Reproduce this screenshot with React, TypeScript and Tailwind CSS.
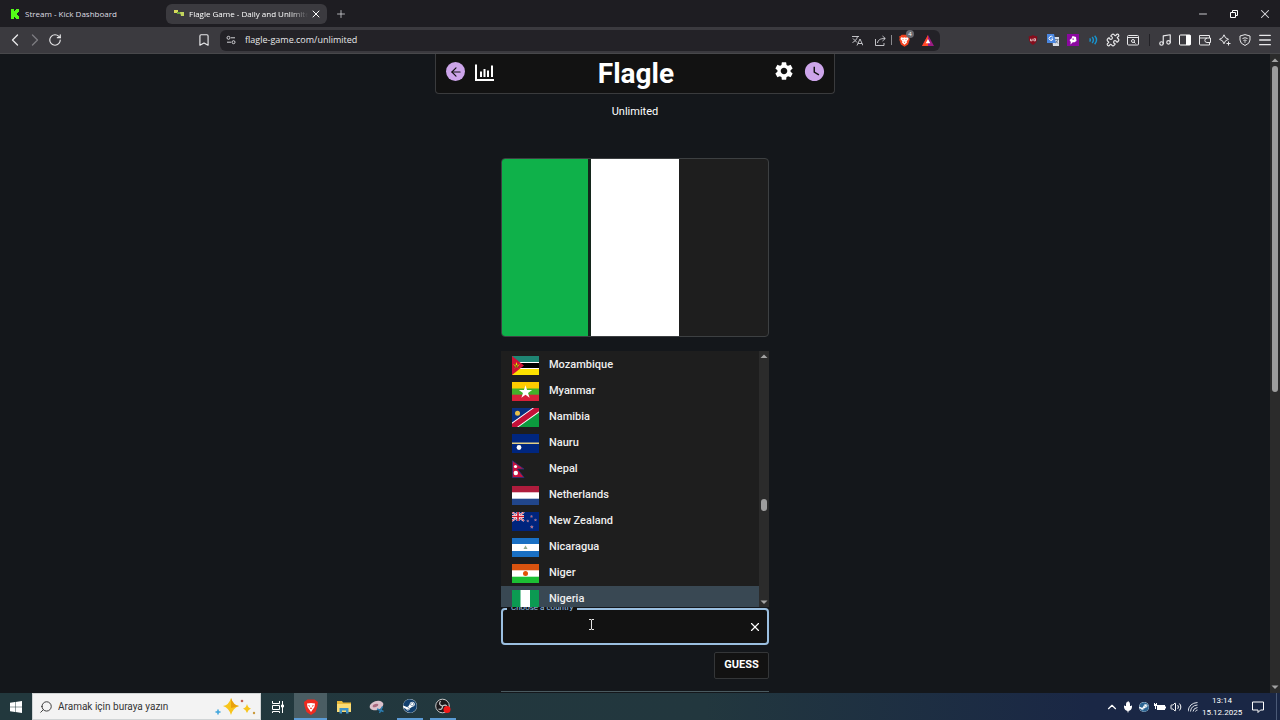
import type { ReactNode } from "react";
import {
  ArrowLeft,
  Bookmark,
  ChevronLeft,
  ChevronRight,
  ChevronUp,
  Menu,
  Mic,
  Minus,
  Music,
  Plus,
  Puzzle,
  RotateCw,
  Search,
  Volume2,
  X,
} from "lucide-react";
import { MdSettings, MdWatchLater } from "react-icons/md";
import { FaSteam } from "react-icons/fa";

const star = "M0-1 .22-.31.95-.31.36.12.59.81 0 .38-.59.81-.36.12-.95-.31-.22-.31Z";

const flags: Record<string, ReactNode> = {
  Mozambique: (
    <>
      <path fill="#fff" d="M0 0h27v19H0z" />
      <path fill="#1f8573" d="M0 0h27v6H0z" />
      <path fill="#000" d="M0 7h27v5H0z" />
      <path fill="#fce100" d="M0 13h27v6H0z" />
      <path fill="#d21034" d="M0 0v19l12-9.500z" />
      <path fill="#fce100" d={star} transform="translate(4.500 9.500) scale(3.600)" />
      <path stroke="#222" strokeWidth=".8" d="m2.500 12 4-4m-4 0 4 4" />
    </>
  ),
  Myanmar: (
    <>
      <path fill="#fecb00" d="M0 0h27v7H0z" />
      <path fill="#43b02a" d="M0 6.500h27V13H0z" />
      <path fill="#d8203a" d="M0 12.700h27V19H0z" />
      <path fill="#fff" d={star} transform="translate(13.500 10.200) scale(7)" />
    </>
  ),
  Namibia: (
    <>
      <path fill="#0a2f80" d="M0 0h27L0 19z" />
      <path fill="#0c9a3e" d="M27 0v19H0z" />
      <path fill="#fff" d="M0 14.500 20.500 0H27v4.500L6.500 19H0z" />
      <path fill="#c41038" d="M0 15.700 22 0h5v3.300L5 19H0z" />
      <circle cx="5.500" cy="5.200" r="2.500" fill="#e8c04a" />
    </>
  ),
  Nauru: (
    <>
      <path fill="#00267f" d="M0 0h27v19H0z" />
      <path fill="#e3cf85" d="M0 8.500h27V10H0z" />
      <circle cx="7" cy="13.500" r="2.400" fill="#fff" />
    </>
  ),
  Nepal: (
    <>
      <path fill="#c8103e" stroke="#24347e" strokeWidth=".8" d="M.4.8 12 9H5.500l6.500 8.500H.4z" />
      <circle cx="3.500" cy="6.500" r="1.600" fill="#fff" />
      <circle cx="3.800" cy="13" r="2.200" fill="#fff" />
    </>
  ),
  Netherlands: (
    <>
      <path fill="#fff" d="M0 0h27v19H0z" />
      <path fill="#ae1c3c" d="M0 0h27v6.300H0z" />
      <path fill="#21468b" d="M0 12.700h27V19H0z" />
    </>
  ),
  "New Zealand": (
    <>
      <path fill="#00247d" d="M0 0h27v19H0z" />
      <path stroke="#fff" strokeWidth="2" d="m0 0 12 9M12 0 0 9" />
      <path stroke="#cc142b" strokeWidth=".8" d="m0 0 12 9M12 0 0 9" />
      <path stroke="#fff" strokeWidth="3" d="M6 0v9M0 4.500h12" />
      <path stroke="#cc142b" strokeWidth="1.700" d="M6 0v9M0 4.500h12" />
      <g fill="#cc142b" stroke="#fff" strokeWidth=".2">
        <path d={star} transform="translate(19.500 4.500) scale(1.200)" />
        <path d={star} transform="translate(15.800 9) scale(1.200)" />
        <path d={star} transform="translate(23.500 8) scale(1.200)" />
        <path d={star} transform="translate(19.800 15) scale(1.500)" />
      </g>
    </>
  ),
  Nicaragua: (
    <>
      <path fill="#fff" d="M0 0h27v19H0z" />
      <path fill="#1a70c4" d="M0 0h27v6H0zM0 13h27v6H0z" />
      <path fill="#8fa98f" d="m13.500 7.500 2 3.500h-4z" />
    </>
  ),
  Niger: (
    <>
      <path fill="#fff" d="M0 0h27v19H0z" />
      <path fill="#d9530f" d="M0 0h27v6.300H0z" />
      <path fill="#1cc034" d="M0 12.700h27V19H0z" />
      <circle cx="13.500" cy="9.500" r="2.500" fill="#e05206" />
    </>
  ),
  Nigeria: (
    <>
      <path fill="#fff" d="M0 0h27v19H0z" />
      <path fill="#0b9a52" d="M0 0h8.500v19H0zM18 0h9v19h-9z" />
    </>
  ),
};

const countries = Object.keys(flags);

function ScrollArrow({ down = false }: { down?: boolean }) {
  return (
    <svg viewBox="0 0 10 10" className="size-2.5 shrink-0">
      <path fill="#a3a3a3" d={down ? "M1.500 3.500h7L5 7z" : "M1.500 7h7L5 3.500z"} />
    </svg>
  );
}

function IconButton({ label, className = "w-5", children }: { label: string; className?: string; children: ReactNode }) {
  return (
    <button aria-label={label} className={`flex h-full shrink-0 items-center justify-center ${className}`}>
      {children}
    </button>
  );
}

function TabStrip() {
  return (
    <div className="flex h-[27px] shrink-0 items-center bg-[#1e1d22] text-[8px] text-[#dedee2]">
      <button className="flex w-[166px] items-center gap-[5px] pl-2.5">
        <svg viewBox="0 0 10 10" className="size-2.5">
          <path fill="#53fc18" d="M1 0h3v2h1V1h1V0h3v3H8v1H7v2h1v1h1v3H6V9H5V8H4v2H1z" />
        </svg>
        Stream - Kick Dashboard
      </button>
      <div className="flex h-5 w-[161px] items-center rounded-md bg-[#3b3a3f] pl-2 text-white">
        <svg viewBox="0 0 10 10" className="mr-[5px] size-2.5 shrink-0">
          <path fill="#d7d95c" d="M0 1h4v3H0z" />
          <path fill="#68a33d" d="M3 3h4v2H3z" />
          <path fill="#c2d45e" d="M6 3h4v4H7z" />
        </svg>
        <button className="w-[119px] overflow-hidden whitespace-nowrap text-left [mask-image:linear-gradient(to_right,black_85%,transparent)]">
          Flagle Game - Daily and Unlimited
        </button>
        <IconButton label="Close tab" className="w-4">
          <X className="size-3" />
        </IconButton>
      </div>
      <IconButton label="New tab" className="w-7">
        <Plus className="size-3" strokeWidth={1.5} />
      </IconButton>
      <div className="ml-auto flex h-full">
        <IconButton label="Minimize" className="w-[30px]">
          <Minus className="size-3" strokeWidth={1.8} />
        </IconButton>
        <IconButton label="Restore" className="w-[31px]">
          <svg viewBox="0 0 8 8" className="size-2" fill="none" stroke="#fff">
            <path d="M.5 2.500h5v5h-5zM2.500 2V.5h5v5H6" />
          </svg>
        </IconButton>
        <IconButton label="Close" className="w-[31px]">
          <X className="size-3.5" strokeWidth={1.8} />
        </IconButton>
      </div>
    </div>
  );
}

function Toolbar() {
  return (
    <div className="flex h-[27px] shrink-0 items-center border-b border-[#48484b] bg-[#3b3a3f] px-[5px] text-[#e8e8ea]">
      <IconButton label="Back">
        <ChevronLeft className="size-5" strokeWidth={1.6} />
      </IconButton>
      <IconButton label="Forward">
        <ChevronRight className="size-5 text-[#7c7b80]" strokeWidth={1.6} />
      </IconButton>
      <IconButton label="Reload">
        <RotateCw className="size-3.5" />
      </IconButton>
      <div className="flex flex-1 items-center gap-1.5 pl-[129px] pr-[83px]">
        <IconButton label="Bookmark">
          <Bookmark className="size-3.5" />
        </IconButton>
        <div className="flex h-[21px] flex-1 items-center rounded-md bg-[#232227] pr-px">
          <IconButton label="Site settings" className="w-[25px] pr-1">
            <svg viewBox="0 0 10 10" className="size-2.5" fill="none" stroke="#d4d4d8">
              <circle cx="2.500" cy="2.800" r="1.500" />
              <path d="M5 2.800h4M1 7.200h4" />
              <circle cx="7.500" cy="7.200" r="1.500" />
            </svg>
          </IconButton>
          <input
            aria-label="Address"
            defaultValue="flagle-game.com/unlimited"
            className="min-w-0 flex-1 bg-transparent text-[9px] outline-none"
          />
          <IconButton label="Translate" className="w-[23px]">
            <svg viewBox="0 0 11 11" className="size-[11px]" fill="none" stroke="#d4d4d8" strokeWidth=".9">
              <path d="M0 1.500h7M1 3.500l4 4M5.500 1.500C5 4 3 6.500.5 7.500M5 10.500 8 4l3 6.500M6 8.500h4" />
            </svg>
          </IconButton>
          <IconButton label="Share" className="w-[22px]">
            <svg viewBox="0 0 11 11" className="size-[11px]" fill="none" stroke="#d4d4d8" strokeWidth=".9">
              <path d="M.5 4v6.500H9V8M2.500 8C3 5 5 3.500 10 3.500M7.500 1l2.800 2.500L7.500 6" />
            </svg>
          </IconButton>
          <span className="h-2.5 w-px bg-[#8a8a8e]" />
          <IconButton label="Brave Shields" className="relative w-6">
            <svg viewBox="0 0 16 16" className="size-[13px]">
              <path fill="#f4431f" d="M4.500 1h7L13 2.600l1.500.2-.5 2.700.4 1.500-2 6L8 15.700 3.600 13l-2-6L2 5.500l-.5-2.700 1.500-.2z" />
              <path fill="#fff" d="m4 4 2.500.6L8 4l1.500.6L12 4l1 2-2.300 3 .3 1.400L8 13.200l-3-2.800L5.300 9 3 6z" />
              <path fill="#f4431f" d="m5 6 2 .7-.5 1zM11 6l-2 .7.500 1zM6.800 9.600h2.400L8 11z" />
            </svg>
            <span className="absolute right-0.5 top-0 flex size-2 items-center justify-center rounded-full bg-[#68696f] text-[6px] leading-none text-white">
              4
            </span>
          </IconButton>
          <IconButton label="Brave Rewards" className="w-[23px]">
            <svg viewBox="0 0 12 11" className="h-[11px] w-3">
              <path fill="#9b1b83" d="m6 0 6 11H0z" />
              <path fill="#ff4724" d="M6 0v11H0z" />
              <path fill="#fff" d="m6 4 2.300 4.200H3.700z" />
            </svg>
          </IconButton>
        </div>
      </div>
      <IconButton label="uBlock Origin">
        <svg viewBox="0 0 12 12" className="size-2.5">
          <path fill="#850d1c" d="M6 0c2 1.300 3.500 1.500 5 1.500C11.500 7 9.500 10 6 12 2.500 10 .5 7 1 1.500 2.500 1.500 4 1.300 6 0z" />
          <path fill="none" stroke="#fff" strokeWidth=".8" d="M3 4.500V7h2V4.500M7 4.500h2V7H7z" />
        </svg>
      </IconButton>
      <IconButton label="Google Translate">
        <svg viewBox="0 0 12 12" className="size-3">
          <path fill="#d9dde5" d="M5 3h7v9H6z" />
          <path fill="#4a86e0" d="M0 0h7l2 9H0z" />
          <path fill="none" stroke="#fff" d="M5.800 3.300A2 2 0 1 0 6 5H4.300" />
          <path stroke="#5c6b7d" strokeWidth=".8" fill="none" d="M8 5.500h3.500M10.500 6c-.3 1.500-1 2.500-2 3M9 7l2 2.500" />
        </svg>
      </IconButton>
      <IconButton label="Extension">
        <svg viewBox="0 0 12 12" className="size-3">
          <path fill="#8b08a0" d="M0 0h12v12H0z" />
          <path fill="#fff" d="M5.500 2 9 3l.5 4L7 8.500 6 8l-2.500 2.500.3-2.500L2.500 6l2-1.500z" />
          <path fill="#8b08a0" d="M5.500 4.500h1.300v1.300H5.500z" />
        </svg>
      </IconButton>
      <IconButton label="Volume booster">
        <svg viewBox="0 0 12 12" className="size-2.5" fill="none" stroke="#1794cf" strokeWidth="1.700">
          <path d="M2 4q1.500 2 0 4M5 2.500q3 3.500 0 7M8 1q4.500 5 0 10" />
        </svg>
      </IconButton>
      <IconButton label="Extensions">
        <Puzzle className="size-3.5" />
      </IconButton>
      <IconButton label="Search tabs">
        <svg viewBox="0 0 12 12" className="size-3" fill="none" stroke="#e8e8ea">
          <rect x=".5" y="1.500" width="11" height="9.500" rx="1" />
          <path d="M1 3.500h10M7 8l1.500 1.500" />
          <circle cx="6" cy="7" r="1.500" />
        </svg>
      </IconButton>
      <span className="flex w-3 justify-center">
        <span className="h-3 w-px bg-[#222126]" />
      </span>
      <IconButton label="Playlist">
        <Music className="size-3.5" />
      </IconButton>
      <IconButton label="Sidebar">
        <svg viewBox="0 0 12 12" className="size-3">
          <rect x=".5" y="1" width="11" height="10" rx="1" fill="none" stroke="#fff" />
          <path fill="#fff" d="M7 1h4.500v10H7z" />
        </svg>
      </IconButton>
      <IconButton label="Wallet">
        <svg viewBox="0 0 12 12" className="size-3" fill="none" stroke="#e8e8ea">
          <path d="M10.500 4V1.500h-10v8.500q0 1 1 1h9V9M.5 4h11v4.500H8a2 2 0 0 1 0-4.300" />
        </svg>
      </IconButton>
      <IconButton label="Leo AI">
        <svg viewBox="0 0 12 12" className="size-3" fill="none" stroke="#e8e8ea">
          <path d="M5 .8q.8 3.700 4.500 4.500Q5.800 6.100 5 9.800 4.200 6.100.5 5.300 4.200 4.500 5 .8zM9.500 7.500v4M7.500 9.500h4" />
        </svg>
      </IconButton>
      <IconButton label="VPN">
        <svg viewBox="0 0 12 12" className="size-3" fill="none" stroke="#e8e8ea">
          <path d="M6 .6 11 2v4q0 3.500-5 5.500Q1 9.500 1 6V2zM3.500 4.500q2.500-1.500 5 0M4.500 6.500q1.500-1 3 0" />
          <circle cx="6" cy="8" r=".3" />
        </svg>
      </IconButton>
      <IconButton label="Menu">
        <Menu className="size-4" />
      </IconButton>
    </div>
  );
}

function GameHeader() {
  return (
    <header className="flex h-10 w-[400px] shrink-0 items-start justify-between rounded-b-sm border border-t-0 border-[#3a3b3d] bg-[#121212] pl-2.5 pr-2">
      <div className="flex w-20 gap-2.5 pt-2">
        <button aria-label="Back" className="flex size-[19px] items-center justify-center rounded-full bg-[#cda5ea] text-[#121212]">
          <ArrowLeft className="size-3.5" />
        </button>
        <button aria-label="Statistics">
          <svg viewBox="0 0 19 19" className="size-[19px]" fill="none" stroke="#fff" strokeWidth="2">
            <path d="M1 2.500V18h18M6 15V9.500M9.500 15V7M13 15V8.500M17 15V3.500" />
          </svg>
        </button>
      </div>
      <h1 className="pt-1 text-[28px] font-bold leading-8 text-white">Flagle</h1>
      <div className="flex w-20 items-start justify-end gap-2 pt-1.5">
        <button aria-label="Settings">
          <MdSettings className="size-[22px] text-white" />
        </button>
        <button aria-label="Daily">
          <MdWatchLater className="size-[23px] text-[#cda5ea]" />
        </button>
      </div>
    </header>
  );
}

function CountryPicker() {
  return (
    <div className="mt-3.5 w-full">
      <div className="relative z-10 flex h-64 bg-[#1e1e1e]">
        <ul role="listbox" aria-label="Countries" className="flex-1 overflow-hidden pt-px">
          {countries.map((name) => (
            <li
              key={name}
              role="option"
              aria-selected={name === "Nigeria"}
              className="flex h-[26px] items-center gap-2.5 pl-[11px] text-[11px] font-medium text-[#eeeeee] aria-selected:bg-[#394853]"
            >
              <svg viewBox="0 0 27 19" className="mt-px h-[19px] w-[27px]">
                {flags[name]}
              </svg>
              {name}
            </li>
          ))}
        </ul>
        <div className="flex w-2.5 flex-col items-center justify-between bg-[#2b2b2b]">
          <ScrollArrow />
          <span className="mt-[52px] h-3 w-1.5 rounded-full bg-[#9d9d9d]" />
          <ScrollArrow down />
        </div>
      </div>
      <div className="relative mt-px flex h-[37px] items-center rounded-sm border-2 border-[#9bbfe0] bg-[#121212]">
        <label htmlFor="country" className="absolute -top-2 left-1 bg-[#121212] px-1 text-[8px] leading-3 text-[#9bc4ec]">
          Choose a country
        </label>
        <input id="country" className="h-full min-w-0 flex-1 bg-transparent px-3 text-xs text-white outline-none" />
        <IconButton label="Clear" className="w-6 text-white">
          <X className="size-3.5" />
        </IconButton>
        <svg viewBox="0 0 7 11" className="absolute left-[85px] top-[9px] h-[11px] w-[7px]" fill="none" stroke="#e4e4e4">
          <path d="M1 .5h2l.5.5.5-.5h2M3.500 1v9M1 10.500h2l.5-.5.5.5h2" />
        </svg>
      </div>
      <button className="ml-auto mt-[7px] block h-[27px] w-[55px] rounded-xs border border-[#343638] bg-[#121212] text-[11px] font-bold text-white">
        GUESS
      </button>
    </div>
  );
}

function TaskButton({ label, active = "", children }: { label: string; active?: string; children: ReactNode }) {
  return (
    <button aria-label={label} className="flex h-full w-[33px] flex-col items-center justify-between">
      <span className={`flex w-full flex-1 items-center justify-center ${active === "focused" ? "bg-[#4a5d63]" : ""}`}>{children}</span>
      <span className={active === "focused" ? "h-0.5 w-full bg-[#5b9bd5]" : active ? "h-0.5 w-[26px] bg-[#5b9bd5]" : ""} />
    </button>
  );
}

function Taskbar() {
  return (
    <footer className="flex h-[27px] shrink-0 items-center bg-linear-to-r from-[#22383d] via-[#22373e] via-55% to-[#1a2745] to-85% text-white">
      <IconButton label="Start" className="w-8">
        <svg viewBox="0 0 12 12" className="size-3" fill="#fff">
          <path d="m0 1.700 5-.7v4.700H0zM5.500.9 12 0v5.700H5.500zM0 6.200h5V11l-5-.7zM5.500 6.200H12V12l-6.500-.9z" />
        </svg>
      </IconButton>
      <div className="flex h-full w-[229px] items-center border border-[#d0d4d5] bg-[#f3f3f3] pl-1.5 pr-1 text-[#333]">
        <Search className="size-3.5 -scale-x-100" strokeWidth={1.6} />
        <input
          aria-label="Search"
          placeholder="Aramak için buraya yazın"
          className="ml-[5px] min-w-0 flex-1 font-[Roboto,sans-serif] text-[10px] outline-none placeholder:text-[#333]"
        />
        <svg viewBox="0 0 42 20" className="h-5 w-[42px]">
          <path fill="#f8c51c" d="M17 1q2 7 8 8-6 2-8 9-2-7-8-9 6-1 8-8zM33 7q1 4 4 4.500-3 1-4 4.500-1-3.500-4-4.500 3-.5 4-4.500z" />
          <path fill="#e9a10b" d="M17 1q2 7 8 8l-8 2z" />
          <path stroke="#3ea4dc" strokeWidth="1.500" d="M4 12.500v5M1.500 15h5" />
          <circle cx="28" cy="4" r="1.300" fill="#c66252" />
          <circle cx="40" cy="16" r="1.200" fill="#c99a3d" />
        </svg>
      </div>
      <TaskButton label="Task view">
        <svg viewBox="0 0 12 12" className="size-3" fill="none" stroke="#fff">
          <path d="M.5 0v2.500h7V0M.5 4.500h7v4h-7zM.5 12v-1.500h7V12M10.500 0v12M9.500 4h2v2h-2z" />
        </svg>
      </TaskButton>
      <TaskButton label="Brave" active="focused">
        <svg viewBox="0 0 16 16" className="mt-0.5 size-4">
          <path fill="#ef2b20" d="M4.500.5h7L15 3l-.5 4-2 6L8 16l-4.500-3-2-6L1 3z" />
          <path fill="#fff" d="M4 4.500 8 4l4 .5L11.500 8 8 13 4.500 8z" />
          <path fill="#ef2b20" d="m5 6 2 .7L6.500 8zM11 6l-2 .7.500 1.300zM8 8l1 2H7z" />
        </svg>
      </TaskButton>
      <TaskButton label="File Explorer">
        <svg viewBox="0 0 16 14" className="h-3.5 w-4">
          <path fill="#e8b839" d="M1 1h5l1 1.500h8V12H1z" />
          <path fill="#fbdc74" d="M1 4h14v8H1z" />
          <path fill="#3f93c9" d="M3.500 13.500V8h9v5.500h-2.500V10.500H6v3z" />
        </svg>
      </TaskButton>
      <TaskButton label="Snipping Tool">
        <svg viewBox="0 0 16 14" className="h-3.5 w-4">
          <ellipse cx="7.500" cy="5.500" rx="7" ry="4.500" fill="#dcc2cc" transform="rotate(-18 7.500 5.500)" />
          <ellipse cx="6.500" cy="5.500" rx="3" ry="1.500" fill="#aa6a80" transform="rotate(-18 6.500 5.500)" />
          <path fill="none" stroke="#2b7fb5" strokeWidth="1.400" d="m8 9 6.500 2.500M13.500 6.500l-3 6.500" />
        </svg>
      </TaskButton>
      <TaskButton label="Steam" active="open">
        <span className="rounded-full bg-white">
          <FaSteam className="size-3.5 text-[#12406e]" />
        </span>
      </TaskButton>
      <TaskButton label="OBS Studio" active="open">
        <svg viewBox="0 0 16 16" className="size-4">
          <circle cx="7.500" cy="8" r="6.800" fill="#1c1a1d" stroke="#c9c9c9" />
          <path fill="none" stroke="#c9c9c9" strokeWidth="1.200" d="M7.500 8Q3 7 5.500 3M7.500 8q4-2.500 4.500 1.500M7.500 8q0 4.500-4 3" />
          <circle cx="12" cy="11.500" r="3.500" fill="#f21818" />
        </svg>
      </TaskButton>
      <div className="ml-auto flex h-full items-center">
        <IconButton label="Show hidden icons" className="w-4">
          <ChevronUp className="size-3.5" />
        </IconButton>
        <IconButton label="Microphone" className="w-4">
          <Mic className="size-3" fill="#fff" />
        </IconButton>
        <IconButton label="Steam" className="w-4">
          <span className="rounded-full bg-white">
            <FaSteam className="size-2.5 text-[#2b6492]" />
          </span>
        </IconButton>
        <IconButton label="Battery" className="w-4">
          <svg viewBox="0 0 12 10" className="h-2.5 w-3">
            <path fill="#fff" d="M3 3h8v1.500h1v2h-1V8H3zM0 1h1v1h1V1h1v3H2v3H1V4H0z" />
          </svg>
        </IconButton>
        <IconButton label="Volume" className="w-4">
          <Volume2 className="size-3" />
        </IconButton>
        <IconButton label="Network" className="w-[18px]">
          <svg viewBox="0 0 10 10" className="size-2.5" fill="none" stroke="#dfe3ea">
            <path d="M0 9.500Q1 1 9.500.5M2.500 9.500q.5-6 7-6.500M5 9.500q.5-3.500 4.500-4M7.500 9.500Q8 8 9.500 8" />
          </svg>
        </IconButton>
        <button className="w-10 whitespace-nowrap text-center font-[Roboto,sans-serif] text-[8px] leading-3">
          13:14
          <br />
          15.12.2025
        </button>
        <IconButton label="Notifications" className="w-8">
          <svg viewBox="0 0 12 12" className="size-3" fill="none" stroke="#fff">
            <path d="M.5 1h11v8H8.500L6 11.500V9H.5z" />
          </svg>
        </IconButton>
        <span className="ml-0.5 mr-[3px] h-full w-px bg-[#4b5a76]" />
      </div>
    </footer>
  );
}

export default function App() {
  return (
    <div className="flex h-screen flex-col overflow-hidden bg-[#14171b] font-['Open_Sans',sans-serif]">
      <TabStrip />
      <Toolbar />
      <div className="flex min-h-0 flex-1">
        <main className="flex min-w-0 flex-1 flex-col items-center overflow-hidden font-[Roboto,sans-serif]">
          <GameHeader />
          <p className="mt-2.5 text-[11px] leading-4 text-white">Unlimited</p>
          <div className="mt-[38px] flex w-[268px] shrink-0 flex-col items-center">
            <div className="flex h-[179px] w-full shrink-0 overflow-hidden rounded-sm border border-[#3d4042] bg-[#1e1e1e]">
              <span className="w-1/3 border-r-3 border-[#14261b] bg-[#0fb14a]" />
              <span className="w-1/3 bg-white" />
            </div>
            <CountryPicker />
            <div className="mt-3 h-10 w-full shrink-0 border-t border-[#4a5a60]" />
          </div>
        </main>
        <div className="flex w-2.5 flex-col items-center bg-[#2b2b2b] py-px">
          <ScrollArrow />
          <span className="mt-px h-[326px] w-1.5 rounded-full bg-[#9d9d9d]" />
          <span className="flex-1" />
          <ScrollArrow down />
        </div>
      </div>
      <Taskbar />
    </div>
  );
}
